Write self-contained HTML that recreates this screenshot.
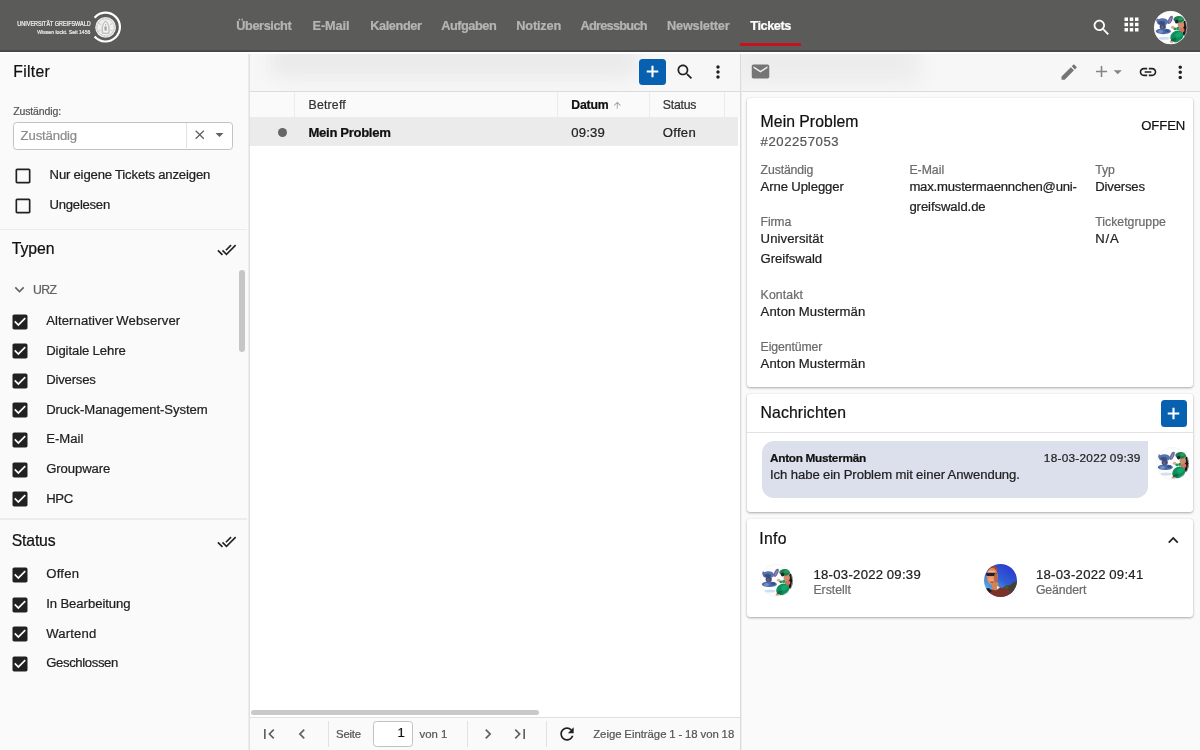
<!DOCTYPE html>
<html lang="de">
<head>
<meta charset="utf-8">
<title>Tickets</title>
<style>
*{box-sizing:border-box;margin:0;padding:0}
html,body{width:1200px;height:750px;overflow:hidden;background:#fff}
body{font-family:"Liberation Sans",sans-serif;font-size:13px;color:#212121;position:relative}
.abs{position:absolute}
.ly{will-change:transform}
.t{position:absolute;white-space:nowrap;-webkit-text-stroke:0.22px}
svg{display:block;overflow:visible}
#hdr{position:absolute;left:0;top:0;width:1200px;height:52px;background:linear-gradient(#5b5b59 0,#5b5b59 49.8px,#4b4b4a 50.4px,#484847 51.5px,#9a9a99 52px)}
#side{position:absolute;left:0;top:52px;width:248px;height:698px;background:#fafafa}
#sideb{position:absolute;left:248px;top:52px;width:2px;height:698px;background:linear-gradient(90deg,#ececec 0,#ececec 50%,#e1e1e1 50%)}
#ctr{position:absolute;left:250px;top:52px;width:490px;height:698px;background:#fff}
#ctrb{position:absolute;left:740px;top:52px;width:2px;height:698px;background:linear-gradient(90deg,#dadada 0,#dadada 50%,#efefef 50%)}
#det{position:absolute;left:742px;top:52px;width:458px;height:698px;background:#fafafa}
#hl{position:absolute;left:0;top:52px;width:1200px;height:1.5px;background:#fff}
.card{position:absolute;background:#fff;border-radius:3px;box-shadow:0 1px 2.5px rgba(0,0,0,.32),0 0 1px rgba(0,0,0,.12)}

</style>
</head>
<body>
<div id="side"></div><div id="sideb"></div><div id="ctr"></div><div id="ctrb"></div><div id="det"></div><div id="hdr"></div>
<!-- Filter -->
<div class="abs ly" style="left:0;top:0;width:1200px;height:750px">
<div class="abs" style="left:13px;top:122px;width:219.5px;height:27.5px;border:1px solid #c2c2c2;border-radius:3.5px;background:#fff"></div>
<div class="abs" style="left:185.5px;top:122.5px;width:1.5px;height:25.5px;background:#e2e2e2"></div>
<svg class="abs" style="left:191.95px;top:127.25px" width="15.5" height="15.5" viewBox="0 0 24 24" ><path fill="#616161" d="M19 6.41L17.59 5 12 10.59 6.41 5 5 6.41 10.59 12 5 17.59 6.41 19 12 13.41 17.59 19 19 17.59 13.41 12z"/></svg>
<svg class="abs" style="left:209.80px;top:125.30px" width="19" height="19" viewBox="0 0 24 24" ><path fill="#616161" d="M7 10l5 5 5-5z"/></svg>
<svg class="abs" style="left:13.10px;top:165.80px" width="20" height="20" viewBox="0 0 24 24"><path fill="#212121" d="M19 5v14H5V5h14m0-2H5c-1.100 0-2 .900-2 2v14c0 1.100.900 2 2 2h14c1.100 0 2-.900 2-2V5c0-1.100-.900-2-2-2z"/></svg>
<svg class="abs" style="left:13.10px;top:195.80px" width="20" height="20" viewBox="0 0 24 24"><path fill="#212121" d="M19 5v14H5V5h14m0-2H5c-1.100 0-2 .900-2 2v14c0 1.100.900 2 2 2h14c1.100 0 2-.900 2-2V5c0-1.100-.900-2-2-2z"/></svg>
<div class="abs" style="left:0;top:228.5px;width:247px;height:1.5px;background:#ececec"></div>
<svg class="abs" style="left:216.95px;top:239.95px" width="19.5" height="19.5" viewBox="0 0 24 24" ><path fill="#212121" d="M18 7l-1.41-1.41-6.34 6.34 1.41 1.41L18 7zm4.24-1.41L11.66 16.17 7.48 12l-1.41 1.41L11.66 19l12-12-1.42-1.41zM.41 13.41L6 19l1.41-1.41L1.83 12 .41 13.41z"/></svg>
<div class="abs" style="left:239.3px;top:270px;width:5.4px;height:81.5px;border-radius:3px;background:#c6c6c6"></div>
<svg class="abs" style="left:10.20px;top:280.40px" width="19" height="19" viewBox="0 0 24 24" ><path fill="#616161" d="M16.59 8.59L12 13.17 7.41 8.59 6 10l6 6 6-6z"/></svg>
<svg class="abs" style="left:9.80px;top:311.80px" width="20" height="20" viewBox="0 0 24 24"><path fill="#212121" d="M19 3H5c-1.11 0-2 .9-2 2v14c0 1.1.89 2 2 2h14c1.11 0 2-.9 2-2V5c0-1.1-.89-2-2-2zm-9 14l-5-5 1.41-1.41L10 14.17l7.590-7.590L19 8l-9 9z"/></svg>
<svg class="abs" style="left:9.80px;top:341.35px" width="20" height="20" viewBox="0 0 24 24"><path fill="#212121" d="M19 3H5c-1.11 0-2 .9-2 2v14c0 1.1.89 2 2 2h14c1.11 0 2-.9 2-2V5c0-1.1-.89-2-2-2zm-9 14l-5-5 1.41-1.41L10 14.17l7.590-7.590L19 8l-9 9z"/></svg>
<svg class="abs" style="left:9.80px;top:370.90px" width="20" height="20" viewBox="0 0 24 24"><path fill="#212121" d="M19 3H5c-1.11 0-2 .9-2 2v14c0 1.1.89 2 2 2h14c1.11 0 2-.9 2-2V5c0-1.1-.89-2-2-2zm-9 14l-5-5 1.41-1.41L10 14.17l7.590-7.590L19 8l-9 9z"/></svg>
<svg class="abs" style="left:9.80px;top:400.45px" width="20" height="20" viewBox="0 0 24 24"><path fill="#212121" d="M19 3H5c-1.11 0-2 .9-2 2v14c0 1.1.89 2 2 2h14c1.11 0 2-.9 2-2V5c0-1.1-.89-2-2-2zm-9 14l-5-5 1.41-1.41L10 14.17l7.590-7.590L19 8l-9 9z"/></svg>
<svg class="abs" style="left:9.80px;top:430.00px" width="20" height="20" viewBox="0 0 24 24"><path fill="#212121" d="M19 3H5c-1.11 0-2 .9-2 2v14c0 1.1.89 2 2 2h14c1.11 0 2-.9 2-2V5c0-1.1-.89-2-2-2zm-9 14l-5-5 1.41-1.41L10 14.17l7.590-7.590L19 8l-9 9z"/></svg>
<svg class="abs" style="left:9.80px;top:459.55px" width="20" height="20" viewBox="0 0 24 24"><path fill="#212121" d="M19 3H5c-1.11 0-2 .9-2 2v14c0 1.1.89 2 2 2h14c1.11 0 2-.9 2-2V5c0-1.1-.89-2-2-2zm-9 14l-5-5 1.41-1.41L10 14.17l7.590-7.590L19 8l-9 9z"/></svg>
<svg class="abs" style="left:9.80px;top:489.10px" width="20" height="20" viewBox="0 0 24 24"><path fill="#212121" d="M19 3H5c-1.11 0-2 .9-2 2v14c0 1.1.89 2 2 2h14c1.11 0 2-.9 2-2V5c0-1.1-.89-2-2-2zm-9 14l-5-5 1.41-1.41L10 14.17l7.590-7.590L19 8l-9 9z"/></svg>
<div class="abs" style="left:0;top:518px;width:247px;height:1.5px;background:#ececec"></div>
<svg class="abs" style="left:216.95px;top:531.75px" width="19.5" height="19.5" viewBox="0 0 24 24" ><path fill="#212121" d="M18 7l-1.41-1.41-6.34 6.34 1.41 1.41L18 7zm4.24-1.41L11.66 16.17 7.48 12l-1.41 1.41L11.66 19l12-12-1.42-1.41zM.41 13.41L6 19l1.41-1.41L1.83 12 .41 13.41z"/></svg>
<svg class="abs" style="left:9.80px;top:565.00px" width="20" height="20" viewBox="0 0 24 24"><path fill="#212121" d="M19 3H5c-1.11 0-2 .9-2 2v14c0 1.1.89 2 2 2h14c1.11 0 2-.9 2-2V5c0-1.1-.89-2-2-2zm-9 14l-5-5 1.41-1.41L10 14.17l7.590-7.590L19 8l-9 9z"/></svg>
<svg class="abs" style="left:9.80px;top:594.55px" width="20" height="20" viewBox="0 0 24 24"><path fill="#212121" d="M19 3H5c-1.11 0-2 .9-2 2v14c0 1.1.89 2 2 2h14c1.11 0 2-.9 2-2V5c0-1.1-.89-2-2-2zm-9 14l-5-5 1.41-1.41L10 14.17l7.590-7.590L19 8l-9 9z"/></svg>
<svg class="abs" style="left:9.80px;top:624.10px" width="20" height="20" viewBox="0 0 24 24"><path fill="#212121" d="M19 3H5c-1.11 0-2 .9-2 2v14c0 1.1.89 2 2 2h14c1.11 0 2-.9 2-2V5c0-1.1-.89-2-2-2zm-9 14l-5-5 1.41-1.41L10 14.17l7.590-7.590L19 8l-9 9z"/></svg>
<svg class="abs" style="left:9.80px;top:653.65px" width="20" height="20" viewBox="0 0 24 24"><path fill="#212121" d="M19 3H5c-1.11 0-2 .9-2 2v14c0 1.1.89 2 2 2h14c1.11 0 2-.9 2-2V5c0-1.1-.89-2-2-2zm-9 14l-5-5 1.41-1.41L10 14.17l7.590-7.590L19 8l-9 9z"/></svg>
<span class="t" style="left:13.30px;top:61.14px;font-size:15.75px;line-height:22px;color:#111;letter-spacing:0.292px;">Filter</span>
<span class="t" style="left:13.20px;top:104.06px;font-size:10.5px;line-height:15px;color:#555;letter-spacing:-0.122px;">Zuständig:</span>
<span class="t" style="left:20.60px;top:126.75px;font-size:13.125px;line-height:18px;color:#8c8c8c;letter-spacing:-0.128px;">Zuständig</span>
<span class="t" style="left:49.60px;top:165.95px;font-size:13.125px;line-height:18px;color:#212121;letter-spacing:-0.146px;word-spacing:-0.297px;">Nur eigene Tickets anzeigen</span>
<span class="t" style="left:49.60px;top:195.95px;font-size:13.125px;line-height:18px;color:#212121;letter-spacing:-0.262px;">Ungelesen</span>
<span class="t" style="left:11.80px;top:238.24px;font-size:15.75px;line-height:22px;color:#111;letter-spacing:-0.061px;">Typen</span>
<span class="t" style="left:33.00px;top:281.96px;font-size:12.25px;line-height:17px;color:#616161;letter-spacing:-0.629px;">URZ</span>
<span class="t" style="left:46.20px;top:312.25px;font-size:13.125px;line-height:18px;color:#212121;letter-spacing:0.081px;word-spacing:-0.831px;">Alternativer Webserver</span>
<span class="t" style="left:46.20px;top:341.80px;font-size:13.125px;line-height:18px;color:#212121;letter-spacing:-0.089px;word-spacing:-0.192px;">Digitale Lehre</span>
<span class="t" style="left:46.20px;top:371.35px;font-size:13.125px;line-height:18px;color:#212121;letter-spacing:-0.188px;">Diverses</span>
<span class="t" style="left:46.20px;top:400.90px;font-size:13.125px;line-height:18px;color:#212121;letter-spacing:-0.082px;">Druck-Management-System</span>
<span class="t" style="left:46.20px;top:430.45px;font-size:13.125px;line-height:18px;color:#212121;">E-Mail</span>
<span class="t" style="left:46.20px;top:460.00px;font-size:13.125px;line-height:18px;color:#212121;letter-spacing:-0.078px;">Groupware</span>
<span class="t" style="left:46.20px;top:489.55px;font-size:13.125px;line-height:18px;color:#212121;letter-spacing:-0.349px;">HPC</span>
<span class="t" style="left:11.80px;top:529.74px;font-size:15.75px;line-height:22px;color:#111;letter-spacing:-0.187px;">Status</span>
<span class="t" style="left:46.20px;top:565.45px;font-size:13.125px;line-height:18px;color:#212121;letter-spacing:0.272px;">Offen</span>
<span class="t" style="left:46.20px;top:595.00px;font-size:13.125px;line-height:18px;color:#212121;letter-spacing:-0.047px;word-spacing:-0.234px;">In Bearbeitung</span>
<span class="t" style="left:46.20px;top:624.55px;font-size:13.125px;line-height:18px;color:#212121;letter-spacing:0.188px;">Wartend</span>
<span class="t" style="left:46.20px;top:654.10px;font-size:13.125px;line-height:18px;color:#212121;letter-spacing:-0.364px;">Geschlossen</span>
</div>
<!-- Liste -->
<div class="abs ly" style="left:0;top:0;width:1200px;height:750px">
<div class="abs" style="left:250px;top:52px;width:490px;height:39.5px;background:#f7f7f7"></div>
<div class="abs" style="left:250px;top:52px;width:490px;height:39px;overflow:hidden"><div class="abs" style="left:20px;top:-12px;width:368px;height:38px;background:#eaeaea;filter:blur(9px);border-radius:12px"></div></div>
<div class="abs" style="left:639.4px;top:58.8px;width:26.4px;height:26.4px;border-radius:3.5px;background:#0760b0"></div>
<svg class="abs" style="left:642.10px;top:61.30px" width="21" height="21" viewBox="0 0 24 24" ><path fill="#fff" d="M10.8 5.4h2.4v5.4h5.4v2.4h-5.4v5.4h-2.4v-5.4H5.4v-2.4h5.4z"/></svg>
<svg class="abs" style="left:675.30px;top:62.00px" width="20" height="20" viewBox="0 0 24 24" ><path fill="#212121" d="M15.5 14h-.79l-.28-.27C15.41 12.59 16 11.11 16 9.5 16 5.91 13.09 3 9.5 3S3 5.91 3 9.5 5.91 16 9.5 16c1.61 0 3.09-.59 4.23-1.57l.27.28v.79l5 4.99L20.49 19l-4.99-5zm-6 0C7.01 14 5 11.99 5 9.5S7.01 5 9.5 5 14 7.01 14 9.5 11.99 14 9.5 14z"/></svg>
<svg class="abs" style="left:707.90px;top:61.50px" width="20" height="20" viewBox="0 0 24 24" ><path fill="#212121" d="M12 8c1.1 0 2-.9 2-2s-.9-2-2-2-2 .9-2 2 .9 2 2 2zm0 2c-1.1 0-2 .9-2 2s.9 2 2 2 2-.9 2-2-.9-2-2-2zm0 6c-1.1 0-2 .9-2 2s.9 2 2 2 2-.9 2-2-.9-2-2-2z"/></svg>
<div class="abs" style="left:250px;top:91px;width:490px;height:1px;background:#dcdcdc"></div>
<div class="abs" style="left:250px;top:92px;width:490px;height:25.2px;background:#fafafa"></div>
<div class="abs" style="left:294.2px;top:92px;width:1px;height:25.2px;background:#ececec"></div>
<div class="abs" style="left:557.1px;top:92px;width:1px;height:25.2px;background:#ececec"></div>
<div class="abs" style="left:649.1px;top:92px;width:1px;height:25.2px;background:#ececec"></div>
<div class="abs" style="left:723.9px;top:92px;width:1px;height:25.2px;background:#ececec"></div>
<div class="abs" style="left:250px;top:117.2px;width:488px;height:28.6px;background:#ebebeb"></div>
<svg class="abs" style="left:611.75px;top:99.95px" width="10.5" height="10.5" viewBox="0 0 24 24" ><path fill="#9a9a9a" d="M4 12l1.41 1.41L11 7.83V20h2V7.83l5.58 5.59L20 12l-8-8-8 8z"/></svg>
<div class="abs" style="left:278.2px;top:127.8px;width:9px;height:9px;border-radius:50%;background:#666"></div>
<div class="abs" style="left:251.3px;top:709.7px;width:288px;height:5.2px;border-radius:3px;background:#c9c9c9"></div>
<div class="abs" style="left:250px;top:717px;width:490px;height:33px;background:#fafafa;border-top:1px solid #e0e0e0"></div>
<svg class="abs" style="left:259.10px;top:724.30px" width="20" height="20" viewBox="0 0 24 24" ><path fill="#616161" d="M18.41 16.59L13.82 12l4.59-4.59L17 6l-6 6 6 6zM6 6h2v12H6z"/></svg>
<svg class="abs" style="left:292.20px;top:724.30px" width="20" height="20" viewBox="0 0 24 24" ><path fill="#616161" d="M15.41 7.41L14 6l-6 6 6 6 1.41-1.41L10.83 12z"/></svg>
<div class="abs" style="left:327.9px;top:721px;width:1px;height:25.5px;background:#e2e2e2"></div>
<div class="abs" style="left:467.0px;top:721px;width:1px;height:25.5px;background:#e2e2e2"></div>
<div class="abs" style="left:546.3px;top:721px;width:1px;height:25.5px;background:#e2e2e2"></div>
<div class="abs" style="left:373.3px;top:721.2px;width:39.4px;height:25.5px;border:1px solid #c2c2c2;border-radius:3.5px;background:#fff"></div>
<svg class="abs" style="left:477.80px;top:724.30px" width="20" height="20" viewBox="0 0 24 24" ><path fill="#616161" d="M10 6L8.59 7.41 13.17 12l-4.58 4.59L10 18l6-6z"/></svg>
<svg class="abs" style="left:509.90px;top:724.30px" width="20" height="20" viewBox="0 0 24 24" ><path fill="#616161" d="M5.59 7.41L10.18 12l-4.59 4.59L7 18l6-6-6-6zM16 6h2v12h-2z"/></svg>
<svg class="abs" style="left:557.10px;top:724.20px" width="20" height="20" viewBox="0 0 24 24" ><path fill="#212121" d="M17.65 6.35C16.2 4.9 14.21 4 12 4c-4.42 0-7.99 3.58-7.99 8s3.57 8 7.99 8c3.73 0 6.84-2.55 7.73-6h-2.08c-.82 2.33-3.04 4-5.65 4-3.31 0-6-2.69-6-6s2.69-6 6-6c1.66 0 3.14.69 4.22 1.78L13 11h7V4l-2.35 2.35z"/></svg>
<span class="t" style="left:308.50px;top:96.76px;font-size:12.25px;line-height:17px;color:#333;letter-spacing:0.221px;">Betreff</span>
<span class="t" style="left:571.30px;top:96.76px;font-size:12.25px;line-height:17px;color:#111;letter-spacing:-0.219px;font-weight:bold;">Datum</span>
<span class="t" style="left:662.80px;top:96.76px;font-size:12.25px;line-height:17px;color:#333;letter-spacing:-0.240px;">Status</span>
<span class="t" style="left:308.50px;top:123.95px;font-size:13.125px;line-height:18px;color:#111;letter-spacing:-0.317px;word-spacing:-0.152px;font-weight:bold;">Mein Problem</span>
<span class="t" style="left:571.20px;top:123.95px;font-size:13.125px;line-height:18px;color:#212121;letter-spacing:0.178px;">09:39</span>
<span class="t" style="left:662.80px;top:123.95px;font-size:13.125px;line-height:18px;color:#212121;letter-spacing:0.272px;">Offen</span>
<span class="t" style="left:336.00px;top:726.16px;font-size:11.375px;line-height:16px;color:#555;letter-spacing:-0.2px;">Seite</span>
<span class="t" style="left:397.50px;top:724.15px;font-size:13.125px;line-height:18px;color:#111;letter-spacing:0.312px;">1</span>
<span class="t" style="left:419.40px;top:726.16px;font-size:11.375px;line-height:16px;color:#555;letter-spacing:0.105px;word-spacing:-0.340px;">von 1</span>
<span class="t" style="left:593.20px;top:726.16px;font-size:11.375px;line-height:16px;color:#555;letter-spacing:-0.026px;word-spacing:-0.268px;">Zeige Einträge 1 - 18 von 18</span>
</div>
<!-- Detail -->
<div class="abs ly" style="left:0;top:0;width:1200px;height:750px">
<div class="abs" style="left:742px;top:52px;width:458px;height:39.5px;background:#f7f7f7"></div>
<div class="abs" style="left:742px;top:52px;width:458px;height:39px;overflow:hidden"><div class="abs" style="left:-8px;top:-12px;width:186px;height:44px;background:#ececec;filter:blur(10px);border-radius:12px"></div></div>
<div class="abs" style="left:742px;top:91px;width:458px;height:1px;background:#dcdcdc"></div>
<svg class="abs" style="left:749.80px;top:61.10px" width="21" height="21" viewBox="0 0 24 24" ><path fill="#757575" d="M20 4H4c-1.1 0-1.99.9-1.99 2L2 18c0 1.1.9 2 2 2h16c1.1 0 2-.9 2-2V6c0-1.1-.9-2-2-2zm0 4l-8 5-8-5V6l8 5 8-5v2z"/></svg>
<svg class="abs" style="left:1058.80px;top:61.90px" width="20.2" height="20.2" viewBox="0 0 24 24" ><path fill="#757575" d="M3 17.25V21h3.75L17.81 9.94l-3.75-3.75L3 17.25zM20.71 7.04c.39-.39.39-1.02 0-1.41l-2.34-2.34c-.39-.39-1.02-.39-1.41 0l-1.83 1.83 3.75 3.75 1.83-1.83z"/></svg>
<svg class="abs" style="left:1092.20px;top:62.20px" width="19" height="19" viewBox="0 0 24 24" ><path fill="#858585" d="M19 13h-6v6h-2v-6H5v-2h6V5h2v6h6v2z"/></svg>
<svg class="abs" style="left:1108.25px;top:62.25px" width="19.5" height="19.5" viewBox="0 0 24 24" ><path fill="#858585" d="M7 10l5 5 5-5z"/></svg>
<svg class="abs" style="left:1137.60px;top:61.50px" width="20" height="20" viewBox="0 0 24 24" ><path fill="#212121" d="M3.9 12c0-1.71 1.39-3.1 3.1-3.1h4V7H7c-2.76 0-5 2.24-5 5s2.24 5 5 5h4v-1.9H7c-1.71 0-3.1-1.39-3.1-3.1zM8 13h8v-2H8v2zm9-6h-4v1.9h4c1.71 0 3.1 1.39 3.1 3.1s-1.39 3.1-3.1 3.1h-4V17h4c2.76 0 5-2.24 5-5s-2.24-5-5-5z"/></svg>
<svg class="abs" style="left:1169.75px;top:61.75px" width="20.5" height="20.5" viewBox="0 0 24 24" ><path fill="#212121" d="M12 8c1.1 0 2-.9 2-2s-.9-2-2-2-2 .9-2 2 .9 2 2 2zm0 2c-1.1 0-2 .9-2 2s.9 2 2 2 2-.9 2-2-.9-2-2-2zm0 6c-1.1 0-2 .9-2 2s.9 2 2 2 2-.9 2-2-.9-2-2-2z"/></svg>
<div class="card" style="left:747px;top:98px;width:446px;height:289px"></div>
<div class="card" style="left:747px;top:394px;width:446px;height:117.5px"></div>
<div class="abs" style="left:1160.6px;top:400.2px;width:26.4px;height:26.4px;border-radius:3.5px;background:#0760b0"></div>
<svg class="abs" style="left:1163.30px;top:402.60px" width="21" height="21" viewBox="0 0 24 24" ><path fill="#fff" d="M10.8 5.4h2.4v5.4h5.4v2.4h-5.4v5.4h-2.4v-5.4H5.4v-2.4h5.4z"/></svg>
<div class="abs" style="left:747px;top:432px;width:446px;height:1px;background:#e2e2e2"></div>
<div class="abs" style="left:762px;top:441px;width:386.4px;height:56.7px;border-radius:12px 0 12px 12px;background:#dcdfec"></div>
<svg class="abs" style="left:1156.00px;top:446.70px" width="33" height="33" viewBox="0 0 33 33">
<defs><clipPath id="cpm"><circle cx="16.5" cy="16.5" r="16.5"/></clipPath>
<filter id="blm" x="-10%" y="-10%" width="120%" height="120%"><feGaussianBlur stdDeviation="0.5"/></filter></defs>
<g clip-path="url(#cpm)"><rect width="33" height="33" fill="#fdfdfd"/><g filter="url(#blm)">
<ellipse cx="10" cy="27" rx="5.5" ry="1.5" fill="#cfdff0"/>
<ellipse cx="16.2" cy="8.8" rx="1.9" ry="4.4" fill="#5f64a6" transform="rotate(24 16.2 8.8)"/>
<ellipse cx="16.1" cy="9" rx="0.9" ry="3.1" fill="#9a7fae" transform="rotate(24 16.1 9)"/>
<ellipse cx="3.4" cy="9.2" rx="1.4" ry="2.8" fill="#4f5f9c" transform="rotate(-32 3.4 9.2)"/>
<ellipse cx="8.4" cy="10.8" rx="5.7" ry="3.6" fill="#5573ab"/>
<ellipse cx="7.6" cy="11.6" rx="3.4" ry="1.7" fill="#3c4d84"/>
<ellipse cx="8.7" cy="15.6" rx="3.1" ry="2.8" fill="#3d4c80"/>
<ellipse cx="8.2" cy="15.8" rx="1.5" ry="1.3" fill="#7d5c62"/>
<ellipse cx="9.3" cy="20.2" rx="7.6" ry="2.8" fill="#4a6aa8"/>
<ellipse cx="6.5" cy="20.4" rx="2.6" ry="1.5" fill="#6f8fc4"/>
<ellipse cx="13.2" cy="19.6" rx="2.2" ry="1.3" fill="#37508e"/>
<ellipse cx="30.6" cy="17.5" rx="2.5" ry="8" fill="#1f1512"/>
<ellipse cx="26.8" cy="13.8" rx="3.2" ry="3.4" fill="#cf8d6c"/>
<ellipse cx="24.8" cy="8.4" rx="5.4" ry="3.4" fill="#1c7c4b"/>
<ellipse cx="26.5" cy="7.6" rx="2.4" ry="1.5" fill="#2d9a62"/>
<ellipse cx="22.6" cy="10.6" rx="1.7" ry="1.9" fill="#1d2a28"/>
<ellipse cx="27.6" cy="18.8" rx="2.7" ry="2.2" fill="#d9705c"/>
<ellipse cx="18.6" cy="16.2" rx="1.7" ry="1.5" fill="#e6a78f"/>
<ellipse cx="21" cy="17.8" rx="1.7" ry="1.4" fill="#2c9156"/>
<ellipse cx="23.8" cy="17.4" rx="1.6" ry="1.7" fill="#2f965a"/>
<ellipse cx="22.8" cy="25.4" rx="6.8" ry="5.6" fill="#0f8f5c" transform="rotate(-28 22.8 25.4)"/>
<ellipse cx="24.5" cy="23.6" rx="3.4" ry="2.6" fill="#17a56c" transform="rotate(-28 24.5 23.6)"/>
<ellipse cx="19.5" cy="28.6" rx="3" ry="1.6" fill="#0b6b45" transform="rotate(-20 19.5 28.6)"/>
<ellipse cx="17.6" cy="30.7" rx="2.1" ry="0.9" fill="#df8e78"/>
</g></g><circle cx="16.5" cy="16.5" r="16.2" fill="none" stroke="#f0f0f0" stroke-width="0.6"/></svg>
<div class="card" style="left:747px;top:518.5px;width:446px;height:98px"></div>
<svg class="abs" style="left:1163.45px;top:529.55px" width="20.5" height="20.5" viewBox="0 0 24 24" ><path fill="#212121" d="M12 8l-6 6 1.41 1.41L12 10.83l4.59 4.59L18 14z"/></svg>
<svg class="abs" style="left:760.40px;top:563.80px" width="33" height="33" viewBox="0 0 33 33">
<defs><clipPath id="cpi"><circle cx="16.5" cy="16.5" r="16.5"/></clipPath>
<filter id="bli" x="-10%" y="-10%" width="120%" height="120%"><feGaussianBlur stdDeviation="0.5"/></filter></defs>
<g clip-path="url(#cpi)"><rect width="33" height="33" fill="#fdfdfd"/><g filter="url(#bli)">
<ellipse cx="10" cy="27" rx="5.5" ry="1.5" fill="#cfdff0"/>
<ellipse cx="16.2" cy="8.8" rx="1.9" ry="4.4" fill="#5f64a6" transform="rotate(24 16.2 8.8)"/>
<ellipse cx="16.1" cy="9" rx="0.9" ry="3.1" fill="#9a7fae" transform="rotate(24 16.1 9)"/>
<ellipse cx="3.4" cy="9.2" rx="1.4" ry="2.8" fill="#4f5f9c" transform="rotate(-32 3.4 9.2)"/>
<ellipse cx="8.4" cy="10.8" rx="5.7" ry="3.6" fill="#5573ab"/>
<ellipse cx="7.6" cy="11.6" rx="3.4" ry="1.7" fill="#3c4d84"/>
<ellipse cx="8.7" cy="15.6" rx="3.1" ry="2.8" fill="#3d4c80"/>
<ellipse cx="8.2" cy="15.8" rx="1.5" ry="1.3" fill="#7d5c62"/>
<ellipse cx="9.3" cy="20.2" rx="7.6" ry="2.8" fill="#4a6aa8"/>
<ellipse cx="6.5" cy="20.4" rx="2.6" ry="1.5" fill="#6f8fc4"/>
<ellipse cx="13.2" cy="19.6" rx="2.2" ry="1.3" fill="#37508e"/>
<ellipse cx="30.6" cy="17.5" rx="2.5" ry="8" fill="#1f1512"/>
<ellipse cx="26.8" cy="13.8" rx="3.2" ry="3.4" fill="#cf8d6c"/>
<ellipse cx="24.8" cy="8.4" rx="5.4" ry="3.4" fill="#1c7c4b"/>
<ellipse cx="26.5" cy="7.6" rx="2.4" ry="1.5" fill="#2d9a62"/>
<ellipse cx="22.6" cy="10.6" rx="1.7" ry="1.9" fill="#1d2a28"/>
<ellipse cx="27.6" cy="18.8" rx="2.7" ry="2.2" fill="#d9705c"/>
<ellipse cx="18.6" cy="16.2" rx="1.7" ry="1.5" fill="#e6a78f"/>
<ellipse cx="21" cy="17.8" rx="1.7" ry="1.4" fill="#2c9156"/>
<ellipse cx="23.8" cy="17.4" rx="1.6" ry="1.7" fill="#2f965a"/>
<ellipse cx="22.8" cy="25.4" rx="6.8" ry="5.6" fill="#0f8f5c" transform="rotate(-28 22.8 25.4)"/>
<ellipse cx="24.5" cy="23.6" rx="3.4" ry="2.6" fill="#17a56c" transform="rotate(-28 24.5 23.6)"/>
<ellipse cx="19.5" cy="28.6" rx="3" ry="1.6" fill="#0b6b45" transform="rotate(-20 19.5 28.6)"/>
<ellipse cx="17.6" cy="30.7" rx="2.1" ry="0.9" fill="#df8e78"/>
</g></g><circle cx="16.5" cy="16.5" r="16.2" fill="none" stroke="#f0f0f0" stroke-width="0.6"/></svg>
<svg class="abs" style="left:983.50px;top:563.90px" width="33" height="33" viewBox="0 0 33 33">
<defs><clipPath id="cpc"><circle cx="16.5" cy="16.5" r="16.5"/></clipPath>
<linearGradient id="skyc" x1="0.8" y1="0" x2="0.1" y2="1"><stop offset="0" stop-color="#2b36cf"/><stop offset="0.45" stop-color="#2f5fd6"/><stop offset="0.8" stop-color="#58a6e3"/><stop offset="1" stop-color="#a8d6f2"/></linearGradient></defs>
<filter id="blc" x="-10%" y="-10%" width="120%" height="120%"><feGaussianBlur stdDeviation="0.6"/></filter><g clip-path="url(#cpc)"><rect width="33" height="33" fill="url(#skyc)"/><g filter="url(#blc)">
<path d="M17 25 L22 21.500 L26 21 L30 18 L33 17 L33 33 L17 33Z" fill="#4a4032"/>
<path d="M18 24.500 L22 21.800 L25 22.500 L23 26Z" fill="#3f5a3a"/>
<ellipse cx="8.6" cy="5.6" rx="5.2" ry="3.600" fill="#a8492c"/>
<ellipse cx="8.2" cy="12.5" rx="5.6" ry="8.4" fill="#dc8d62"/>
<ellipse cx="7.5" cy="8" rx="4" ry="1.6" fill="#f0b490"/>
<rect x="2.2" y="8.800" width="10.800" height="3.300" rx="1.400" fill="#2a1a2c"/>
<ellipse cx="7" cy="15.500" rx="2.600" ry="2.200" fill="#eaa27a"/>
<ellipse cx="11.800" cy="14" rx="1.700" ry="5" fill="#b9653f"/>
<ellipse cx="8" cy="18.200" rx="2" ry="0.800" fill="#a8503a"/>
<path d="M8 19 L14 18 L15 25 L8 27Z" fill="#d08258"/>
<path d="M13 22 L16 23.500 L13 26Z" fill="#f3ece8"/>
<path d="M1 26 L8 25.500 L12 26.500 L16 23.500 L23 25 L28 29 L28 33 L1 33Z" fill="#7c3229"/>
<path d="M1 24.500 L5 24 L8 27 L3 30Z" fill="#2c1e1c"/>
</g></g></svg>
<span class="t" style="left:760.60px;top:110.64px;font-size:15.75px;line-height:22px;color:#111;letter-spacing:0.094px;word-spacing:-0.338px;">Mein Problem</span>
<span class="t" style="left:760.60px;top:133.05px;font-size:13.125px;line-height:18px;color:#555;letter-spacing:0.562px;">#202257053</span>
<span class="t" style="left:1141.29px;top:117.15px;font-size:13.125px;line-height:18px;color:#111;letter-spacing:-0.106px;">OFFEN</span>
<span class="t" style="left:760.60px;top:161.96px;font-size:12.25px;line-height:17px;color:#6b6b6b;letter-spacing:-0.122px;">Zuständig</span>
<span class="t" style="left:760.60px;top:177.95px;font-size:13.125px;line-height:18px;color:#212121;letter-spacing:-0.086px;word-spacing:-0.211px;">Arne Uplegger</span>
<span class="t" style="left:909.40px;top:161.96px;font-size:12.25px;line-height:17px;color:#6b6b6b;letter-spacing:0.005px;">E-Mail</span>
<span class="t" style="left:909.40px;top:177.95px;font-size:13.125px;line-height:18px;color:#212121;letter-spacing:-0.201px;">max.mustermaennchen@uni-</span>
<span class="t" style="left:909.40px;top:197.55px;font-size:13.125px;line-height:18px;color:#212121;letter-spacing:-0.082px;">greifswald.de</span>
<span class="t" style="left:1095.30px;top:161.96px;font-size:12.25px;line-height:17px;color:#6b6b6b;letter-spacing:-0.130px;">Typ</span>
<span class="t" style="left:1095.30px;top:177.95px;font-size:13.125px;line-height:18px;color:#212121;letter-spacing:-0.188px;">Diverses</span>
<span class="t" style="left:760.60px;top:214.46px;font-size:12.25px;line-height:17px;color:#6b6b6b;letter-spacing:-0.169px;">Firma</span>
<span class="t" style="left:760.60px;top:230.35px;font-size:13.125px;line-height:18px;color:#212121;letter-spacing:0.078px;">Universität</span>
<span class="t" style="left:760.60px;top:249.95px;font-size:13.125px;line-height:18px;color:#212121;letter-spacing:-0.045px;">Greifswald</span>
<span class="t" style="left:1095.30px;top:214.46px;font-size:12.25px;line-height:17px;color:#6b6b6b;letter-spacing:0.014px;">Ticketgruppe</span>
<span class="t" style="left:1095.30px;top:230.35px;font-size:13.125px;line-height:18px;color:#212121;letter-spacing:0.740px;">N/A</span>
<span class="t" style="left:760.60px;top:286.76px;font-size:12.25px;line-height:17px;color:#6b6b6b;letter-spacing:0.129px;">Kontakt</span>
<span class="t" style="left:760.60px;top:302.65px;font-size:13.125px;line-height:18px;color:#212121;letter-spacing:0.119px;word-spacing:-0.401px;">Anton Mustermän</span>
<span class="t" style="left:760.60px;top:339.26px;font-size:12.25px;line-height:17px;color:#6b6b6b;letter-spacing:-0.095px;">Eigentümer</span>
<span class="t" style="left:760.60px;top:355.15px;font-size:13.125px;line-height:18px;color:#212121;letter-spacing:0.119px;word-spacing:-0.401px;">Anton Mustermän</span>
<span class="t" style="left:760.60px;top:402.34px;font-size:15.75px;line-height:22px;color:#111;letter-spacing:0.128px;">Nachrichten</span>
<span class="t" style="left:770.00px;top:450.11px;font-size:11.8125px;line-height:17px;color:#111;letter-spacing:-0.289px;word-spacing:-0.117px;font-weight:bold;">Anton Mustermän</span>
<span class="t" style="left:1043.82px;top:450.11px;font-size:11.8125px;line-height:17px;color:#222;letter-spacing:0.264px;word-spacing:-0.529px;">18-03-2022 09:39</span>
<span class="t" style="left:770.00px;top:465.75px;font-size:13.125px;line-height:18px;color:#212121;letter-spacing:-0.057px;word-spacing:-0.224px;">Ich habe ein Problem mit einer Anwendung.</span>
<span class="t" style="left:759.20px;top:528.14px;font-size:15.75px;line-height:22px;color:#111;letter-spacing:0.319px;">Info</span>
<span class="t" style="left:813.40px;top:565.55px;font-size:13.125px;line-height:18px;color:#212121;letter-spacing:0.294px;word-spacing:-0.591px;">18-03-2022 09:39</span>
<span class="t" style="left:813.40px;top:581.96px;font-size:12.25px;line-height:17px;color:#6b6b6b;letter-spacing:0.023px;">Erstellt</span>
<span class="t" style="left:1035.90px;top:565.55px;font-size:13.125px;line-height:18px;color:#212121;letter-spacing:0.294px;word-spacing:-0.591px;">18-03-2022 09:41</span>
<span class="t" style="left:1035.90px;top:581.96px;font-size:12.25px;line-height:17px;color:#6b6b6b;letter-spacing:-0.078px;">Geändert</span>
</div>
<!-- Kopf -->
<div class="abs ly" style="left:0;top:0;width:1200px;height:750px">
<svg class="abs" style="left:90px;top:9px" width="34" height="36" viewBox="0 0 34 36">
<path d="M4.6 8.700 A14.4 14.4 0 1 1 4.6 27.500" fill="none" stroke="#fff" stroke-width="2.2"/>
<circle cx="15.600" cy="18.400" r="10.400" fill="#efefee"/>
<circle cx="15.600" cy="18.400" r="8.700" fill="none" stroke="#a9a9a7" stroke-width="1" stroke-dasharray="0.9 0.7"/>
<path d="M15.600 11.200 C18.200 13.500 20 16.500 19.800 20.500 L19.300 25 L11.900 25 L11.400 20.500 C11.200 16.500 13 13.500 15.600 11.200Z" fill="#c4c4c2"/>
<path d="M15.600 13 C17.300 14.800 18.300 17 18.200 20 L17.900 23.600 L13.300 23.600 L13 20 C12.900 17 13.900 14.800 15.600 13Z" fill="#f6f6f5"/>
<path d="M14.300 17.500 L16.900 17.500 L16.600 21.800 L14.600 21.800Z M15 15.200 L16.200 15.200 L16.200 16.600 L15 16.600Z" fill="#a3a3a1"/>
<path d="M8.500 22 L10.600 21.200 M20.600 21.200 L22.700 22 M9 14.500 L11 15.500 M20.200 15.500 L22.200 14.500" stroke="#b9b9b7" stroke-width="0.8"/>
</svg>
<div class="abs" style="left:740px;top:43px;width:61px;height:2.5px;background:#c4121f"></div>
<svg class="abs" style="left:1090.90px;top:16.90px" width="21" height="21" viewBox="0 0 24 24" ><path fill="#fff" d="M15.5 14h-.79l-.28-.27C15.41 12.59 16 11.11 16 9.5 16 5.91 13.09 3 9.5 3S3 5.91 3 9.5 5.91 16 9.5 16c1.61 0 3.09-.59 4.23-1.57l.27.28v.79l5 4.99L20.49 19l-4.99-5zm-6 0C7.01 14 5 11.99 5 9.5S7.01 5 9.5 5 14 7.01 14 9.5 11.99 14 9.5 14z"/></svg>
<svg class="abs" style="left:1120.60px;top:14.20px" width="21" height="21" viewBox="0 0 24 24" ><path fill="#fff" d="M4 8h4V4H4v4zm6 12h4v-4h-4v4zm-6 0h4v-4H4v4zm0-6h4v-4H4v4zm6 0h4v-4h-4v4zm6-10v4h4V4h-4zm-6 4h4V4h-4v4zm6 6h4v-4h-4v4zm0 6h4v-4h-4v4z"/></svg>
<svg class="abs" style="left:1153.90px;top:11.00px" width="33.2" height="33.2" viewBox="0 0 33 33">
<defs><clipPath id="cph"><circle cx="16.5" cy="16.5" r="16.5"/></clipPath>
<filter id="blh" x="-10%" y="-10%" width="120%" height="120%"><feGaussianBlur stdDeviation="0.5"/></filter></defs>
<g clip-path="url(#cph)"><rect width="33" height="33" fill="#fdfdfd"/><g filter="url(#blh)">
<ellipse cx="10" cy="27" rx="5.5" ry="1.5" fill="#cfdff0"/>
<ellipse cx="16.2" cy="8.8" rx="1.9" ry="4.4" fill="#5f64a6" transform="rotate(24 16.2 8.8)"/>
<ellipse cx="16.1" cy="9" rx="0.9" ry="3.1" fill="#9a7fae" transform="rotate(24 16.1 9)"/>
<ellipse cx="3.4" cy="9.2" rx="1.4" ry="2.8" fill="#4f5f9c" transform="rotate(-32 3.4 9.2)"/>
<ellipse cx="8.4" cy="10.8" rx="5.7" ry="3.6" fill="#5573ab"/>
<ellipse cx="7.6" cy="11.6" rx="3.4" ry="1.7" fill="#3c4d84"/>
<ellipse cx="8.7" cy="15.6" rx="3.1" ry="2.8" fill="#3d4c80"/>
<ellipse cx="8.2" cy="15.8" rx="1.5" ry="1.3" fill="#7d5c62"/>
<ellipse cx="9.3" cy="20.2" rx="7.6" ry="2.8" fill="#4a6aa8"/>
<ellipse cx="6.5" cy="20.4" rx="2.6" ry="1.5" fill="#6f8fc4"/>
<ellipse cx="13.2" cy="19.6" rx="2.2" ry="1.3" fill="#37508e"/>
<ellipse cx="30.6" cy="17.5" rx="2.5" ry="8" fill="#1f1512"/>
<ellipse cx="26.8" cy="13.8" rx="3.2" ry="3.4" fill="#cf8d6c"/>
<ellipse cx="24.8" cy="8.4" rx="5.4" ry="3.4" fill="#1c7c4b"/>
<ellipse cx="26.5" cy="7.6" rx="2.4" ry="1.5" fill="#2d9a62"/>
<ellipse cx="22.6" cy="10.6" rx="1.7" ry="1.9" fill="#1d2a28"/>
<ellipse cx="27.6" cy="18.8" rx="2.7" ry="2.2" fill="#d9705c"/>
<ellipse cx="18.6" cy="16.2" rx="1.7" ry="1.5" fill="#e6a78f"/>
<ellipse cx="21" cy="17.8" rx="1.7" ry="1.4" fill="#2c9156"/>
<ellipse cx="23.8" cy="17.4" rx="1.6" ry="1.7" fill="#2f965a"/>
<ellipse cx="22.8" cy="25.4" rx="6.8" ry="5.6" fill="#0f8f5c" transform="rotate(-28 22.8 25.4)"/>
<ellipse cx="24.5" cy="23.6" rx="3.4" ry="2.6" fill="#17a56c" transform="rotate(-28 24.5 23.6)"/>
<ellipse cx="19.5" cy="28.6" rx="3" ry="1.6" fill="#0b6b45" transform="rotate(-20 19.5 28.6)"/>
<ellipse cx="17.6" cy="30.7" rx="2.1" ry="0.9" fill="#df8e78"/>
</g></g><circle cx="16.5" cy="16.5" r="16.2" fill="none" stroke="#f0f0f0" stroke-width="0.6"/></svg>
<span class="t" style="left:-6.46px;top:18.81px;font-size:7.2px;line-height:10px;color:#f6f6f6;transform:scaleX(0.7584);transform-origin:right center;">UNIVERSITÄT GREIFSWALD</span>
<span class="t" style="left:27.83px;top:27.72px;font-size:6.0px;line-height:8px;color:#ececec;transform:scaleX(0.8513);transform-origin:right center;">Wissen lockt. Seit 1456</span>
<span class="t" style="left:236.30px;top:17.28px;font-size:12.75px;line-height:18px;color:#b5b5b4;letter-spacing:-0.425px;font-weight:bold;">Übersicht</span>
<span class="t" style="left:312.50px;top:17.28px;font-size:12.75px;line-height:18px;color:#b5b5b4;letter-spacing:-0.115px;font-weight:bold;">E-Mail</span>
<span class="t" style="left:370.30px;top:17.28px;font-size:12.75px;line-height:18px;color:#b5b5b4;letter-spacing:-0.424px;font-weight:bold;">Kalender</span>
<span class="t" style="left:441.30px;top:17.28px;font-size:12.75px;line-height:18px;color:#b5b5b4;letter-spacing:-0.488px;font-weight:bold;">Aufgaben</span>
<span class="t" style="left:516.30px;top:17.28px;font-size:12.75px;line-height:18px;color:#b5b5b4;letter-spacing:-0.181px;font-weight:bold;">Notizen</span>
<span class="t" style="left:580.50px;top:17.28px;font-size:12.75px;line-height:18px;color:#b5b5b4;letter-spacing:-0.738px;font-weight:bold;">Adressbuch</span>
<span class="t" style="left:667.00px;top:17.28px;font-size:12.75px;line-height:18px;color:#b5b5b4;letter-spacing:-0.2px;font-weight:bold;">Newsletter</span>
<span class="t" style="left:750.30px;top:17.28px;font-size:12.75px;line-height:18px;color:#ffffff;letter-spacing:-0.451px;font-weight:bold;">Tickets</span>
</div>
<div id="hl"></div>
</body></html>
